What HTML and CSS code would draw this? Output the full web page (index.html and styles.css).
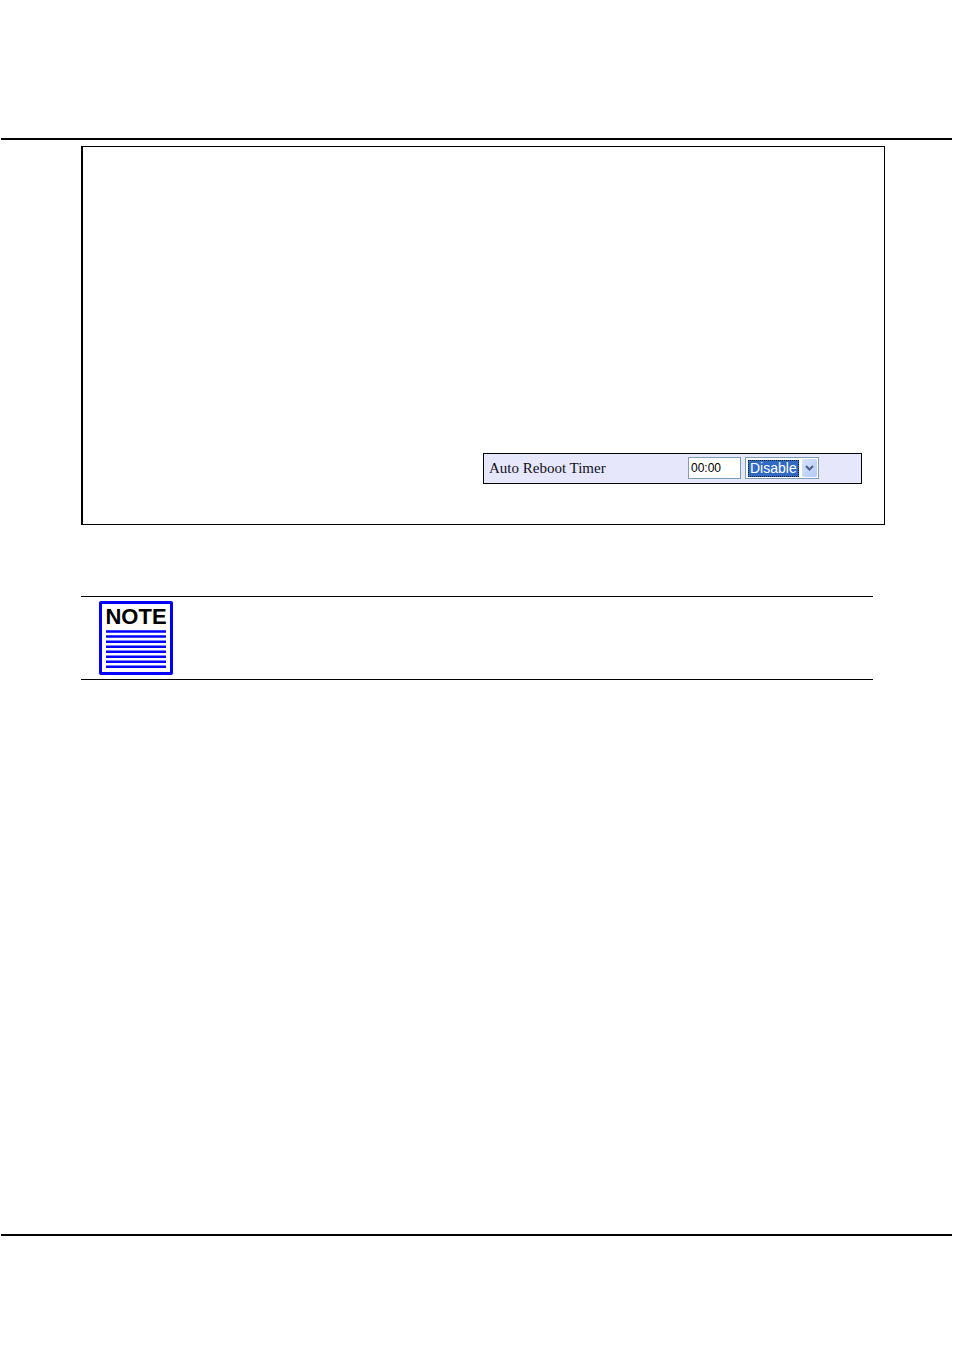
FILE: index.html
```html
<!DOCTYPE html>
<html lang="en">
<head>
  <meta charset="utf-8">
  <title>Auto Reboot Timer</title>
  <link rel="stylesheet" href="styles.css">
</head>
<body>
  <header class="header"></header>
  <main>
    <section class="panel">
      <form class="setting">
        <label class="setting-name" for="reboot-time">Auto Reboot Timer</label>
        <input class="time" id="reboot-time" type="text" value="00:00">
        <div class="mode">
          <select id="reboot-mode" aria-label="Auto Reboot Timer mode">
            <option selected>Disable</option>
            <option>Enable</option>
          </select>
          <span class="arrow">
            <svg width="9" height="6" viewBox="0 0 9 6"><path d="M1 1l3.500 3.500L8 1" fill="none" stroke="#4d6185" stroke-width="2"/></svg>
          </span>
        </div>
      </form>
    </section>
    <section class="note">
      <div class="note-icon">
        <span class="note-title">NOTE</span>
        <svg class="note-lines" width="60" height="39" viewBox="0 0 60 39">
          <path d="M0 1.500h60M0 6.500h60M0 11.700h60M0 16.700h60M0 21.700h60M0 26.700h60M0 31.700h60M0 36.700h60" stroke="#00f" stroke-width="2.600"/>
        </svg>
      </div>
    </section>
  </main>
  <footer class="footer"></footer>
</body>
</html>
```
FILE: styles.css
```css
* {
  box-sizing: border-box;
}

body {
  display: flex;
  flex-direction: column;
  min-height: 100vh;
  margin: 0;
  background-color: #fff;
  color: #000;
  font-family: "Liberation Serif", serif;
}

main {
  flex: 1;
}

.header,
.footer {
  margin: 0 2px 0 1px;
}

.header {
  height: 140px;
  border-bottom: 2px solid #000;
}

.footer {
  height: 121px;
  border-top: 2px solid #000;
}

.panel {
  margin: 6px 69px 0 81px;
  padding: 306px 22px 40px;
  border: 1px solid #000;
  border-left-width: 2px;
}

.setting {
  display: flex;
  align-items: center;
  width: 379px;
  height: 31px;
  margin-left: auto;
  padding: 0 42px 1px 5px;
  border: 1px solid #000;
  background-color: #e7e7fc;
  color: #101020;
}

.setting-name {
  flex: 1;
  font-size: 15px;
}

.time {
  width: 53px;
  height: 22px;
  margin: 0 4px 0 0;
  padding: 0 2px;
  border: 1px solid #7f9db9;
  background-color: #fff;
  color: #000;
  font: 12px "Liberation Sans", sans-serif;
}

.mode {
  display: flex;
  align-items: center;
  justify-content: space-between;
  width: 74px;
  height: 22px;
  padding: 0 1px 0 2px;
  border: 1px solid #7f9db9;
  background-color: #fff;
}

.mode select {
  appearance: none;
  width: 51px;
  height: 17px;
  margin: 0;
  padding: 0 1px;
  border: 1px dotted #101820;
  border-radius: 0;
  background-color: #316ac5;
  color: #fff;
  font: 14px/15px "Liberation Sans", sans-serif;
}

.arrow {
  display: flex;
  align-items: center;
  justify-content: center;
  width: 15px;
  height: 18px;
  border-radius: 2px;
  background: linear-gradient(135deg, #d6e2fd, #b4c8f6);
}

.note {
  margin: 71px 81px 0;
  padding: 4px 18px;
  border-top: 1px solid #000;
  border-bottom: 1px solid #000;
}

.note-icon {
  display: flex;
  flex-direction: column;
  align-items: center;
  width: 74px;
  height: 74px;
  border: 3px solid #00f;
  border-radius: 2px;
}

.note-title {
  padding: 2px 0;
  font: bold 22px/22px "Liberation Sans", sans-serif;
}
```
